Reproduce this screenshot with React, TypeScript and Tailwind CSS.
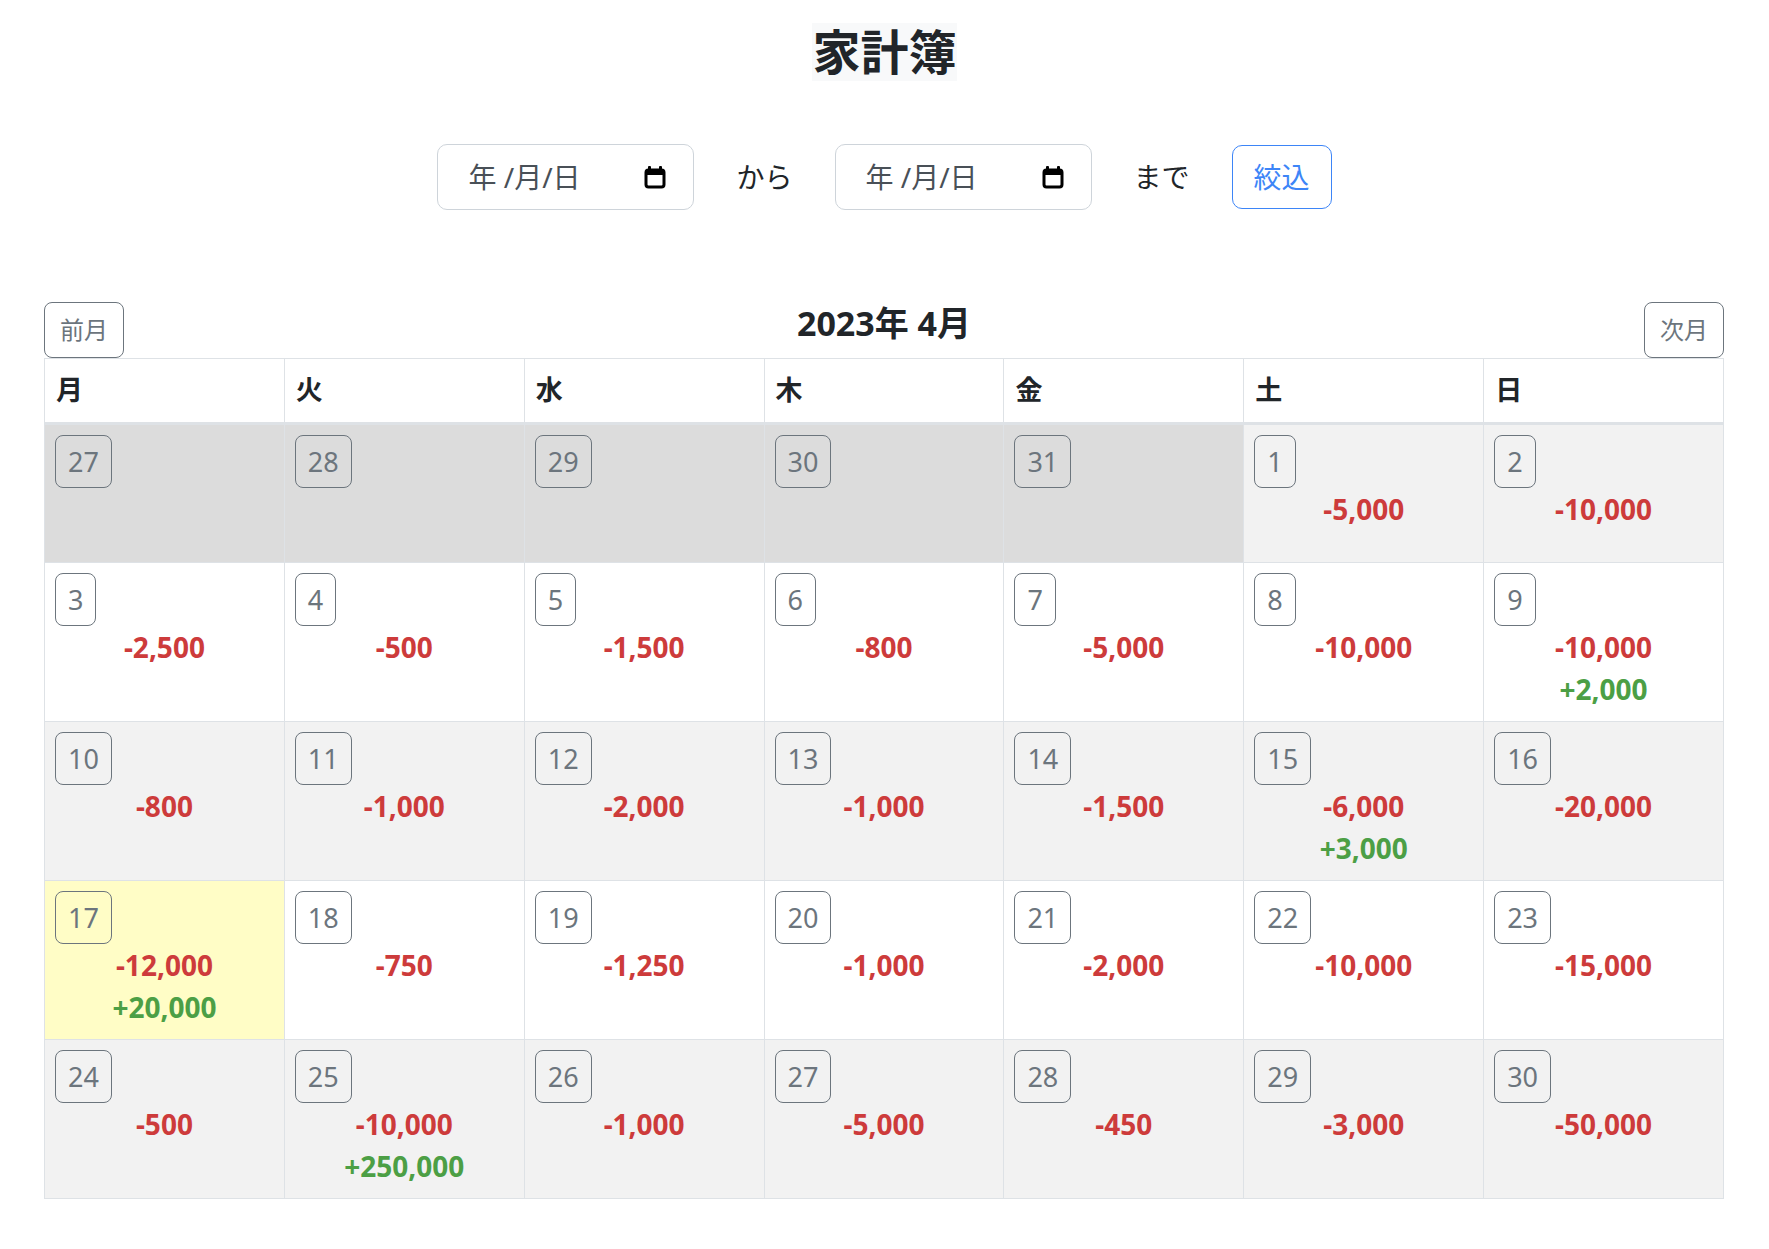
import React from 'react';

type Day = { d: number; prev?: boolean; out?: string; inc?: string; today?: boolean };

const weeks: Day[][] = [
  [
    { d: 27, prev: true },
    { d: 28, prev: true },
    { d: 29, prev: true },
    { d: 30, prev: true },
    { d: 31, prev: true },
    { d: 1, out: '-5,000' },
    { d: 2, out: '-10,000' },
  ],
  [
    { d: 3, out: '-2,500' },
    { d: 4, out: '-500' },
    { d: 5, out: '-1,500' },
    { d: 6, out: '-800' },
    { d: 7, out: '-5,000' },
    { d: 8, out: '-10,000' },
    { d: 9, out: '-10,000', inc: '+2,000' },
  ],
  [
    { d: 10, out: '-800' },
    { d: 11, out: '-1,000' },
    { d: 12, out: '-2,000' },
    { d: 13, out: '-1,000' },
    { d: 14, out: '-1,500' },
    { d: 15, out: '-6,000', inc: '+3,000' },
    { d: 16, out: '-20,000' },
  ],
  [
    { d: 17, out: '-12,000', inc: '+20,000', today: true },
    { d: 18, out: '-750' },
    { d: 19, out: '-1,250' },
    { d: 20, out: '-1,000' },
    { d: 21, out: '-2,000' },
    { d: 22, out: '-10,000' },
    { d: 23, out: '-15,000' },
  ],
  [
    { d: 24, out: '-500' },
    { d: 25, out: '-10,000', inc: '+250,000' },
    { d: 26, out: '-1,000' },
    { d: 27, out: '-5,000' },
    { d: 28, out: '-450' },
    { d: 29, out: '-3,000' },
    { d: 30, out: '-50,000' },
  ],
];

const dows = ['月', '火', '水', '木', '金', '土', '日'];

const CalIcon = () => (
  <svg width="22" height="24" viewBox="0 0 22 24" fill="none">
    <rect x="2" y="5" width="18" height="17" rx="2.5" stroke="#000" strokeWidth="3" />
    <rect x="2" y="5" width="18" height="5" fill="#000" />
    <rect x="4" y="1" width="3" height="5" rx="1" fill="#000" />
    <rect x="15" y="1" width="3" height="5" rx="1" fill="#000" />
  </svg>
);

function DateField() {
  return (
    <div className="flex h-[66px] w-[257px] items-center justify-between rounded-[10px] border border-[#ced4da] bg-white pl-[30px] pr-[27px]">
      <span className="text-[28px] text-[#495057]">年 /月/日</span>
      <CalIcon />
    </div>
  );
}

function Cell({ day, row }: { day: Day; row: number }) {
  const bg = day.today
    ? 'bg-[#fffdc6]'
    : day.prev
    ? 'bg-[#dcdcdc]'
    : row % 2 === 0
    ? 'bg-[#f2f2f2]'
    : 'bg-white';
  return (
    <div className={`min-h-[138px] border-r border-b border-[#dee2e6] px-[10px] pt-[10px] pb-[11px] ${bg}`}>
      <span className="inline-block rounded-[8px] border border-[#6c757d] px-[12px] py-[5px] text-[27px] leading-[41px] text-[#6c757d]">
        {day.d}
      </span>
      {day.out && (
        <div className="text-center text-[28px] font-bold leading-[42px] text-[#cd3b3b]">{day.out}</div>
      )}
      {day.inc && (
        <div className="text-center text-[28px] font-bold leading-[42px] text-[#4c9f45]">{day.inc}</div>
      )}
    </div>
  );
}

export default function App() {
  return (
    <div className="min-h-screen bg-white pb-[50px] font-['Noto_Sans','Noto_Sans_CJK_JP',sans-serif] text-[#212529]">
      <div className="flex justify-center pt-[23px]">
        <h1 className="bg-[#f8f9fa] text-[48px] font-bold leading-[58px]">家計簿</h1>
      </div>

      <div className="mt-[63px] flex h-[66px] items-center justify-center gap-[42px]">
        <DateField />
        <span className="text-[28px]">から</span>
        <DateField />
        <span className="text-[28px]">まで</span>
        <button className="h-[64px] w-[100px] rounded-[10px] border border-[#3d85f7] text-[28px] text-[#3d85f7]">
          絞込
        </button>
      </div>

      <div className="mt-[92px] pl-[44px] pr-[45px]">
        <div className="grid grid-cols-[1fr_auto_1fr] items-start">
          <div>
            <button className="rounded-[8px] border border-[#6c757d] px-[15px] py-[9px] text-[24px] leading-[36px] text-[#6c757d]">
              前月
            </button>
          </div>
          <div className="pt-[1px] text-[34px] font-bold leading-[41px]">2023年 4月</div>
          <div className="flex justify-end">
            <button className="rounded-[8px] border border-[#6c757d] px-[15px] py-[9px] text-[24px] leading-[36px] text-[#6c757d]">
              次月
            </button>
          </div>
        </div>

        <div className="grid grid-cols-7 border-t border-l border-[#dee2e6]">
          {dows.map((w) => (
            <div
              key={w}
              className="flex h-[66px] items-center border-r border-b-[3px] border-[#dee2e6] pl-[11px] text-[27px] font-bold"
            >
              {w}
            </div>
          ))}
          {weeks.map((week, r) =>
            week.map((day, c) => <Cell key={`${r}-${c}`} day={day} row={r} />)
          )}
        </div>
      </div>
    </div>
  );
}
